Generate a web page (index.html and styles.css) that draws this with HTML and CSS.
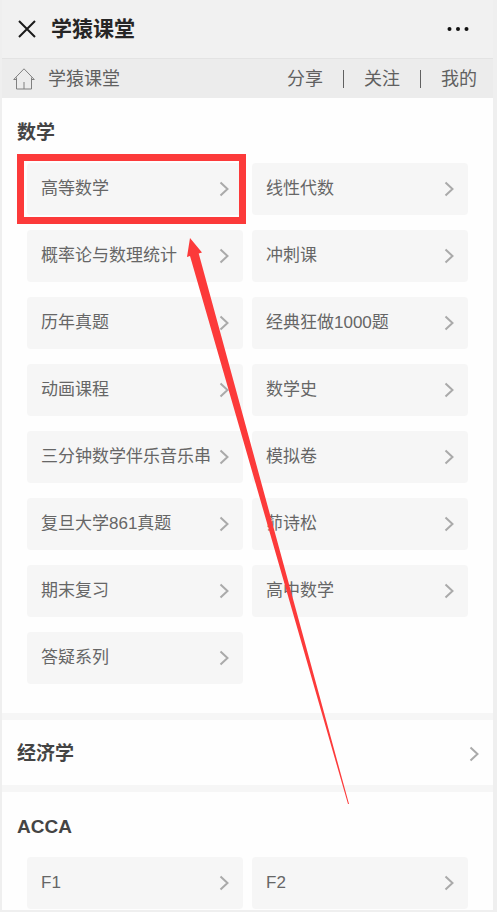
FILE: index.html
```html
<!DOCTYPE html>
<html lang="zh-CN">
<head>
<meta charset="utf-8">
<meta name="viewport" content="width=device-width, initial-scale=1">
<title>学猿课堂</title>
<link rel="stylesheet" href="styles.css">
</head>
<body>
<svg class="defs" aria-hidden="true">
  <symbol id="chevron" viewBox="0 0 10 16"><path d="M1.5 1.5 8.500 8l-7 6.500"/></symbol>
</svg>
<div class="app">
  <header class="titlebar">
    <button class="icon-button" type="button" aria-label="关闭">
      <svg class="close" viewBox="0 0 18 18"><path d="M1 1l16 16M17 1 1 17"/></svg>
    </button>
    <h1 class="title">学猿课堂</h1>
    <button class="icon-button" type="button" aria-label="更多">
      <svg class="more" viewBox="0 0 22 6"><circle cx="2.500" cy="3" r="2"/><circle cx="11" cy="3" r="2"/><circle cx="19.500" cy="3" r="2"/></svg>
    </button>
  </header>

  <nav class="navbar">
    <a class="home" href="#">
      <svg class="house" viewBox="0 0 22 22"><path d="M.7 11.500 11 .8l10.300 10.700H18.500M.7 11.500H3.500M3.500 9.500V21h15V9.500M11 21v-7"/></svg>
      <span>学猿课堂</span>
    </a>
    <a class="nav-link" href="#">分享</a>
    <a class="nav-link" href="#">关注</a>
    <a class="nav-link" href="#">我的</a>
  </nav>

  <main>
    <section class="section math">
      <h2 class="heading">数学</h2>
      <div class="grid">
        <a class="tile marked" href="#"><span>高等数学</span><svg class="chevron"><use href="#chevron"/></svg></a>
        <a class="tile" href="#"><span>线性代数</span><svg class="chevron"><use href="#chevron"/></svg></a>
        <a class="tile" href="#"><span>概率论与数理统计</span><svg class="chevron"><use href="#chevron"/></svg></a>
        <a class="tile" href="#"><span>冲刺课</span><svg class="chevron"><use href="#chevron"/></svg></a>
        <a class="tile" href="#"><span>历年真题</span><svg class="chevron"><use href="#chevron"/></svg></a>
        <a class="tile" href="#"><span>经典狂做1000题</span><svg class="chevron"><use href="#chevron"/></svg></a>
        <a class="tile" href="#"><span>动画课程</span><svg class="chevron"><use href="#chevron"/></svg></a>
        <a class="tile" href="#"><span>数学史</span><svg class="chevron"><use href="#chevron"/></svg></a>
        <a class="tile" href="#"><span>三分钟数学伴乐音乐串</span><svg class="chevron"><use href="#chevron"/></svg></a>
        <a class="tile" href="#"><span>模拟卷</span><svg class="chevron"><use href="#chevron"/></svg></a>
        <a class="tile" href="#"><span>复旦大学861真题</span><svg class="chevron"><use href="#chevron"/></svg></a>
        <a class="tile" href="#"><span>茆诗松</span><svg class="chevron"><use href="#chevron"/></svg></a>
        <a class="tile" href="#"><span>期末复习</span><svg class="chevron"><use href="#chevron"/></svg></a>
        <a class="tile" href="#"><span>高中数学</span><svg class="chevron"><use href="#chevron"/></svg></a>
        <a class="tile" href="#"><span>答疑系列</span><svg class="chevron"><use href="#chevron"/></svg></a>
      </div>
      <svg class="arrow" viewBox="0 0 164 568" aria-hidden="true"><path d="M5 0 17 14.500 13.700 15.400 164 566 163 566 5 18 2 19Z"/></svg>
    </section>

    <section class="section">
      <a class="row" href="#"><h2 class="heading">经济学</h2><svg class="chevron"><use href="#chevron"/></svg></a>
    </section>

    <section class="section acca">
      <h2 class="heading">ACCA</h2>
      <div class="grid">
        <a class="tile" href="#"><span>F1</span><svg class="chevron"><use href="#chevron"/></svg></a>
        <a class="tile" href="#"><span>F2</span><svg class="chevron"><use href="#chevron"/></svg></a>
      </div>
    </section>
  </main>
</div>
</body>
</html>
```

FILE: styles.css
```css
* {
  box-sizing: border-box;
}

body {
  margin: 0;
  padding: 0 4px 2px 2px;
  background: #efefef;
  font-family: "Liberation Sans", "Noto Sans CJK SC", sans-serif;
  color: #333;
}

a {
  color: inherit;
  text-decoration: none;
}

svg {
  display: block;
  flex: none;
  fill: none;
}

.defs {
  position: absolute;
  width: 0;
  height: 0;
}

.app {
  background: #f6f6f6;
}

.titlebar {
  display: flex;
  align-items: center;
  height: 58px;
  padding: 0 24px 0 16px;
  background: #f1f1f1;
}

.icon-button {
  padding: 0;
  border: 0;
  background: none;
}

.close {
  width: 18px;
  height: 18px;
  stroke: #1a1a1a;
  stroke-width: 2;
}

.title {
  flex: 1;
  margin: 0 0 0 15px;
  font-size: 21px;
  line-height: 30px;
  color: #262626;
}

.more {
  width: 22px;
  height: 6px;
  fill: #111;
}

.navbar {
  display: flex;
  align-items: center;
  height: 40px;
  padding: 0 16px 0 11px;
  border-top: 1px solid #e3e3e3;
  background: #ececec;
  font-size: 18px;
  line-height: 18px;
  color: #606060;
}

.home {
  display: flex;
  align-items: center;
  gap: 13px;
  margin-right: auto;
}

.house {
  width: 22px;
  height: 22px;
  stroke: #808080;
  stroke-width: 1;
}

.nav-link + .nav-link {
  margin-left: 20px;
  padding-left: 20px;
  border-left: 1px solid #606060;
}

.section {
  position: relative;
  background: #fefefe;
}

.section + .section {
  margin-top: 7px;
}

.math {
  padding: 21px 0 29px;
}

.acca {
  padding: 21px 0 1px;
}

.heading {
  margin: 0;
  padding-left: 15px;
  font-size: 19px;
  line-height: 28px;
  color: #444;
}

.grid {
  display: grid;
  grid-template-columns: 1fr 1fr;
  gap: 15px 9px;
  margin-top: 16px;
  padding: 0 25px;
}

.tile {
  display: flex;
  align-items: center;
  justify-content: space-between;
  height: 52px;
  padding: 0 14px;
  border-radius: 4px;
  background: #f6f6f6;
  font-size: 17px;
  line-height: 24px;
  color: #666;
  white-space: nowrap;
}

.chevron {
  width: 10px;
  height: 16px;
  stroke: #aaa;
  stroke-width: 2;
}

.row {
  display: flex;
  align-items: center;
  justify-content: space-between;
  height: 65px;
  padding: 3px 14px 0 0;
}

.marked {
  position: relative;
}

.marked::after {
  content: "";
  position: absolute;
  inset: -9px -3px -9px -10px;
  border: 7px solid #fc3a3a;
}

.arrow {
  position: absolute;
  top: 140px;
  left: 183px;
  z-index: 1;
  width: 164px;
  height: 568px;
  fill: #fc3a3a;
}
```
